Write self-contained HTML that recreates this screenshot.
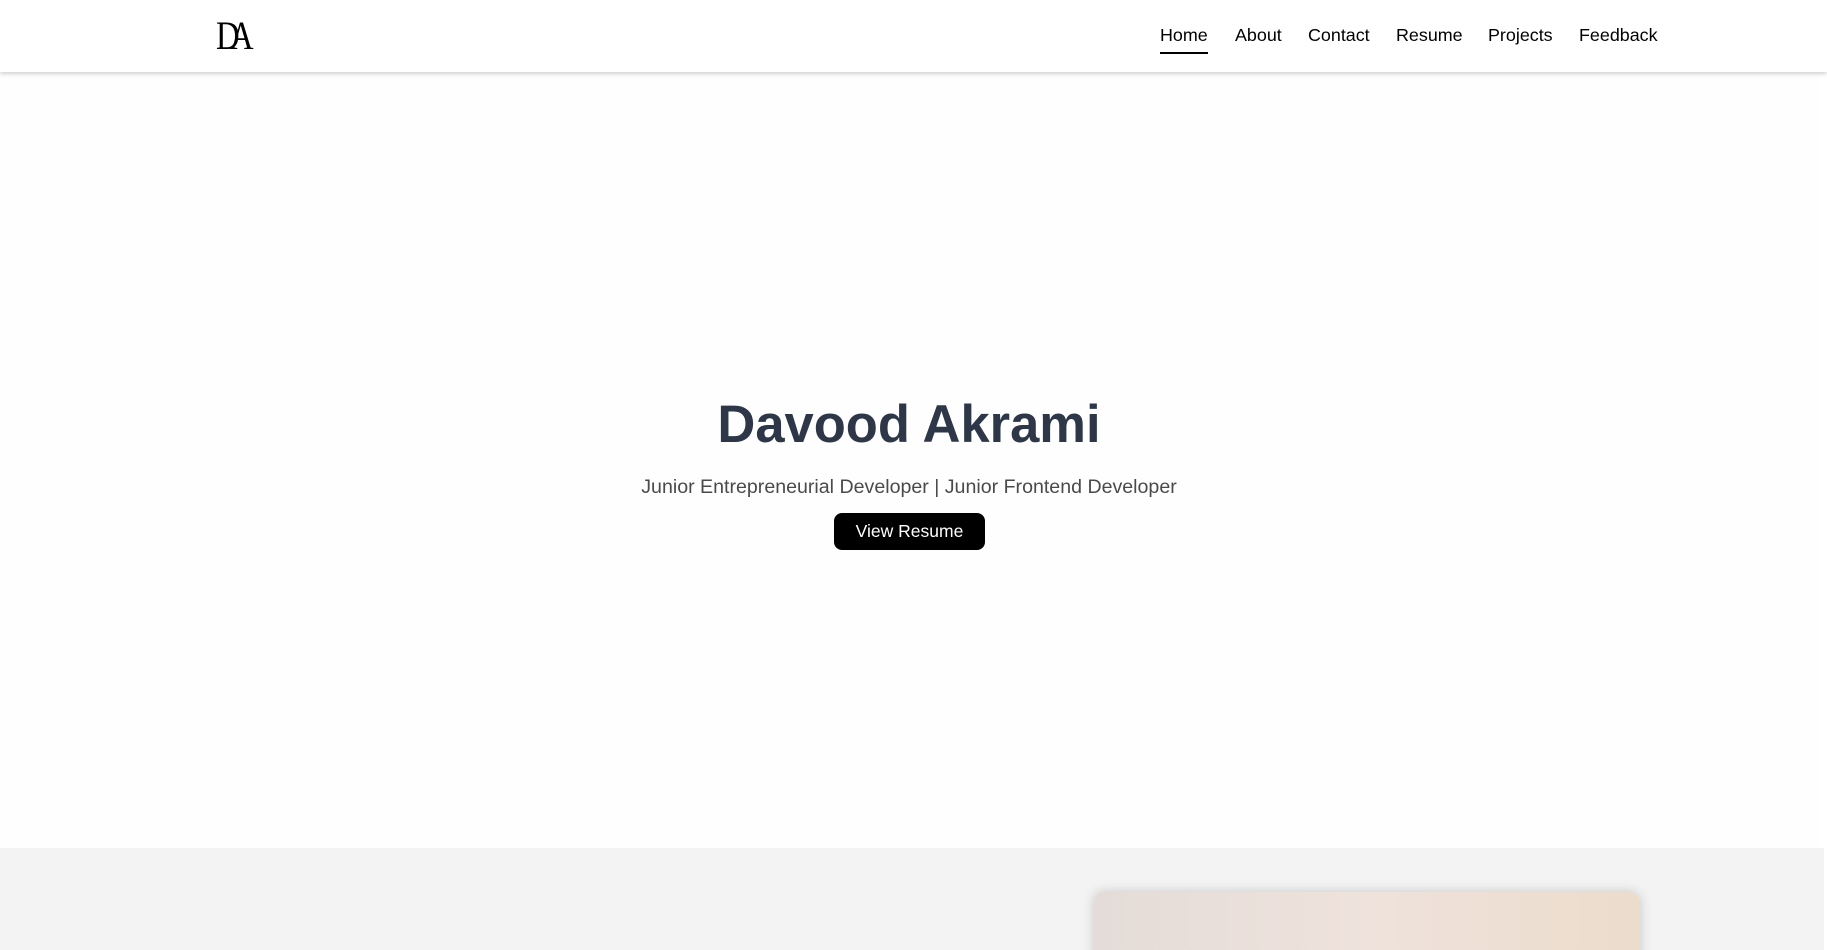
<!DOCTYPE html>
<html><head><style>
*{margin:0;padding:0;box-sizing:border-box}
html,body{width:1827px;height:950px;overflow:hidden}
body{background:#fff;font-family:"Liberation Sans",sans-serif;position:relative}
header{position:absolute;left:0;top:0;width:1827px;height:72px;background:#fff;box-shadow:0 2px 4px rgba(0,0,0,.18);z-index:2}
.logo{position:absolute;left:216px;top:13px;font-family:"Liberation Serif",serif;font-size:40px;line-height:46px;color:#000;letter-spacing:-12px;transform:scaleX(.82);transform-origin:left}
.logo span{letter-spacing:0}
nav{position:absolute;top:25px;font-size:17.9px;color:#000}
nav a{position:absolute;white-space:nowrap;color:#000;text-decoration:none}
.home{border-bottom:2px solid #000;padding-bottom:6px}
.hero{position:absolute;top:72px;left:0;width:1818px;height:776px;background:#fefefe;text-align:center}
h1{position:absolute;top:322px;width:100%;font-size:52.5px;color:#2d3748;font-weight:bold}
.sub{position:absolute;top:404px;width:100%;font-size:19.6px;color:#4a4a4a}
.btn{position:absolute;left:834px;top:441px;width:151px;height:37px;border-radius:8px;background:#000;color:#fff;font-size:17.5px;line-height:37px}
.gray{position:absolute;top:848px;left:0;width:1824px;height:102px;background:#f3f3f3;overflow:hidden}
.card{position:absolute;left:1094px;top:44px;width:546px;height:150px;border-radius:10px;background:linear-gradient(90deg,#e4dcd8,#efe2dc 50%,#ecdccc);box-shadow:0 0 12px rgba(0,0,0,.18)}
</style></head><body>
<header>
<div class="logo">D<span>A</span></div>
<nav>
<a class="home" style="left:1160px">Home</a>
<a style="left:1235px">About</a>
<a style="left:1308px">Contact</a>
<a style="left:1396px">Resume</a>
<a style="left:1488px">Projects</a>
<a style="left:1579px">Feedback</a>
</nav>
</header>
<div class="hero">
<h1>Davood Akrami</h1>
<div class="sub">Junior Entrepreneurial Developer | Junior Frontend Developer</div>
<div class="btn">View Resume</div>
</div>
<div class="gray"><div class="card"></div></div>
</body></html>
